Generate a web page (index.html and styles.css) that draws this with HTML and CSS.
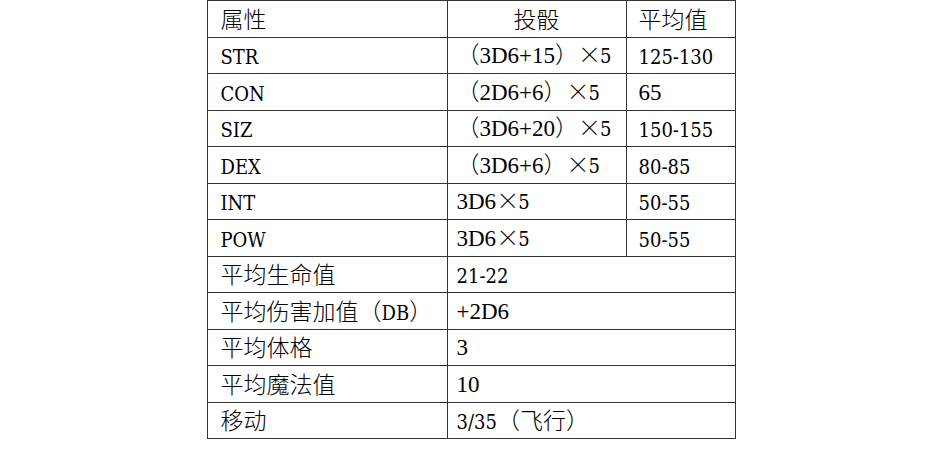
FILE: index.html
```html
<!DOCTYPE html>
<html lang="zh-CN">
<head>
<meta charset="utf-8">
<title>属性表</title>
<link rel="stylesheet" href="styles.css">
</head>
<body>
<table class="stats">
  <colgroup><col class="c1"><col class="c2"><col class="c3"></colgroup>
  <tr><td class="k">属性</td><td class="center">投骰</td><td class="v">平均值</td></tr>
  <tr><td class="k"><span class="m">STR</span></td><td class="d">（<span class="t">3D6+15</span>）<span class="x">×</span><span class="m">5</span></td><td class="v"><span class="m">125-130</span></td></tr>
  <tr><td class="k"><span class="m">CON</span></td><td class="d">（<span class="t">2D6+6</span>）<span class="x">×</span><span class="m">5</span></td><td class="v"><span class="t">65</span></td></tr>
  <tr><td class="k"><span class="m">SIZ</span></td><td class="d">（<span class="t">3D6+20</span>）<span class="x">×</span><span class="m">5</span></td><td class="v"><span class="m">150-155</span></td></tr>
  <tr><td class="k"><span class="m">DEX</span></td><td class="d">（<span class="t">3D6+6</span>）<span class="x">×</span><span class="m">5</span></td><td class="v"><span class="m">80-85</span></td></tr>
  <tr><td class="k"><span class="m">INT</span></td><td class="d"><span class="t">3D6</span><span class="x">×</span><span class="m">5</span></td><td class="v"><span class="m">50-55</span></td></tr>
  <tr><td class="k"><span class="m">POW</span></td><td class="d"><span class="t">3D6</span><span class="x">×</span><span class="m">5</span></td><td class="v"><span class="m">50-55</span></td></tr>
  <tr><td class="k">平均生命值</td><td class="d" colspan="2"><span class="m">21-22</span></td></tr>
  <tr><td class="k">平均伤害加值（<span class="m">DB</span>）</td><td class="d" colspan="2"><span class="t">+2D6</span></td></tr>
  <tr><td class="k">平均体格</td><td class="d" colspan="2"><span class="t">3</span></td></tr>
  <tr><td class="k">平均魔法值</td><td class="d" colspan="2"><span class="t">10</span></td></tr>
  <tr><td class="k">移动</td><td class="d" colspan="2"><span class="m">3/35</span>（飞行）</td></tr>
</table>
</body>
</html>
```

FILE: styles.css
```css
html, body {
  margin: 0;
  padding: 0;
  background: #ffffff;
}

.stats {
  border-collapse: collapse;
  table-layout: fixed;
  width: 528px;
  margin: 0 auto;
  font-family: "Noto Sans CJK SC", sans-serif;
  font-weight: 300;
  font-size: 23px;
  line-height: 1.2;
  color: #000000;
}

.stats .c1 { width: 240px; }
.stats .c2 { width: 179px; }
.stats .c3 { width: 109px; }

.stats tr {
  height: 36.5px;
}

.stats td {
  border: 1px solid #333333;
  padding: 0;
  vertical-align: middle;
  white-space: nowrap;
  text-align: left;
}

.stats td.k { padding-left: 13px; }
.stats td.d { padding-left: 9px; }
.stats td.v { padding-left: 12px; }
.stats td.center { text-align: center; }

.m {
  font-family: "DejaVu Serif", "Liberation Serif", serif;
  font-stretch: condensed;
  font-weight: 400;
  font-size: 20px;
}

.t {
  font-family: "Liberation Serif", serif;
  font-weight: 400;
  font-size: 23px;
}

.x {
  display: inline-block;
  width: 22px;
  text-align: center;
  font-family: "Noto Sans CJK SC", sans-serif;
  font-weight: 300;
}
```
